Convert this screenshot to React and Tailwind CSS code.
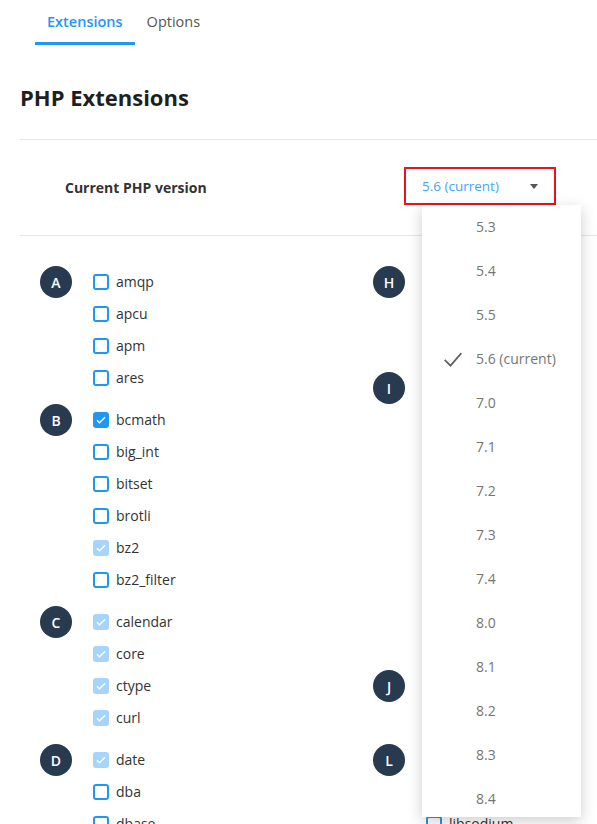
import { useState } from "react";

const left = [
  { letter: "A", items: [["amqp", 0], ["apcu", 0], ["apm", 0], ["ares", 0]] },
  { letter: "B", items: [["bcmath", 1], ["big_int", 0], ["bitset", 0], ["brotli", 0], ["bz2", 2], ["bz2_filter", 0]] },
  { letter: "C", items: [["calendar", 2], ["core", 2], ["ctype", 2], ["curl", 2]] },
  { letter: "D", items: [["date", 2], ["dba", 0], ["dbase", 0], ["dom", 2]] },
];

const right = [
  { letter: "H", items: [["hash", 2], ["http", 0], ["hrtime", 0]] },
  { letter: "I", items: [["iconv", 2], ["igbinary", 0], ["imagick", 0], ["imap", 0], ["inotify", 0], ["interbase", 0], ["intl", 0], ["ioncube_loader", 0], ["ixed", 0]] },
  { letter: "J", items: [["json", 2], ["jsmin", 0]] },
  { letter: "L", items: [["ldap", 0], ["leveldb", 0], ["libsodium", 0], ["lzf", 0]] },
];

const versions = ["5.3", "5.4", "5.5", "5.6 (current)", "7.0", "7.1", "7.2", "7.3", "7.4", "8.0", "8.1", "8.2", "8.3", "8.4"];

function Check({ state }) {
  // 0 = empty, 1 = checked, 2 = checked + disabled
  if (state === 0) {
    return <span className="w-4 h-4 rounded-[3px] border-2 border-[#2196f3] bg-white shrink-0" />;
  }
  return (
    <span className={`w-4 h-4 rounded-[3px] shrink-0 flex items-center justify-center ${state === 1 ? "bg-[#2196f3]" : "bg-[#a6d4fa]"}`}>
      <svg width="12" height="12" viewBox="0 0 24 24" fill="none" stroke="white" strokeWidth="3">
        <path d="M4 12.5l5 5L20 6.5" />
      </svg>
    </span>
  );
}

function Group({ letter, items }) {
  return (
    <div className="flex mb-[10px]">
      <div className="w-8 h-8 rounded-full bg-[#283a4f] text-white flex items-center justify-center text-[14px] font-semibold shrink-0">
        {letter}
      </div>
      <div className="ml-[21px] flex flex-col">
        {items.map(([name, state]) => (
          <label key={name} className="h-8 flex items-center gap-[7px] text-[14px] leading-[20px] text-[#333]">
            <Check state={state} />
            <span className="-mt-px">{name}</span>
          </label>
        ))}
      </div>
    </div>
  );
}

export default function App() {
  const [tab, setTab] = useState("ext");
  const [open] = useState(true);

  return (
    <div className="w-[597px] h-[824px] overflow-hidden bg-white font-['Open_Sans',sans-serif]">
      {/* Tabs */}
      <div className="flex pl-[35px] h-[45px]">
        <button
          onClick={() => setTab("ext")}
          className={`px-3 h-[45px] text-[14.5px] border-b-[3px] pt-px ${tab === "ext" ? "border-[#2196f3] text-[#2196f3] font-semibold" : "border-transparent text-[#555]"}`}
        >
          Extensions
        </button>
        <button
          onClick={() => setTab("opt")}
          className={`px-3 h-[45px] text-[14.5px] border-b-[3px] pt-px ${tab === "opt" ? "border-[#2196f3] text-[#2196f3] font-semibold" : "border-transparent text-[#555]"}`}
        >
          Options
        </button>
      </div>

      <div className="pl-5">
        <h1 className="mt-[37px] mb-[27px] text-[22px] leading-[30px] font-bold text-[#1f1f1f]">PHP Extensions</h1>
        <div className="border-t border-[#e6e6e6]" />

        {/* Version row */}
        <div className="h-[95px] flex items-center pl-[45px]">
          <div className="w-[339px] text-[14px] font-bold text-[#333]">Current PHP version</div>
          <div className="relative mb-[3px]">
            <div className="w-[152px] h-[38px] border-2 border-[#e8141c] flex items-center justify-between pl-4 pr-[16px]">
              <span className="text-[13.5px] text-[#42a5f5]">5.6 (current)</span>
              <span className="w-0 h-0 border-l-[4px] border-r-[4px] border-t-[5px] border-l-transparent border-r-transparent border-t-[#555]" />
            </div>
            {open && (
              <div className="absolute left-[18px] top-[38px] w-[159px] h-[612px] overflow-hidden bg-white shadow-[0_4px_14px_rgba(0,0,0,0.2)] z-10">
                {versions.map((v) => (
                  <div key={v} className="h-11 flex items-center relative text-[14px] text-[#757575]">
                    {v === "5.6 (current)" && (
                      <svg className="absolute left-[21px]" width="20" height="20" viewBox="0 0 24 24" fill="none" stroke="#5f5f5f" strokeWidth="2">
                        <path d="M2 13l7 7L22 5" />
                      </svg>
                    )}
                    <span className="pl-[54px] -mt-px">{v}</span>
                  </div>
                ))}
              </div>
            )}
          </div>
        </div>
        <div className="border-t border-[#e6e6e6]" />

        {/* Extension lists */}
        <div className="grid grid-cols-[333px_1fr] pl-5 pt-[30px]">
          <div>
            {left.map((g) => (
              <Group key={g.letter} {...g} />
            ))}
          </div>
          <div>
            {right.map((g) => (
              <Group key={g.letter} {...g} />
            ))}
          </div>
        </div>
      </div>
    </div>
  );
}
